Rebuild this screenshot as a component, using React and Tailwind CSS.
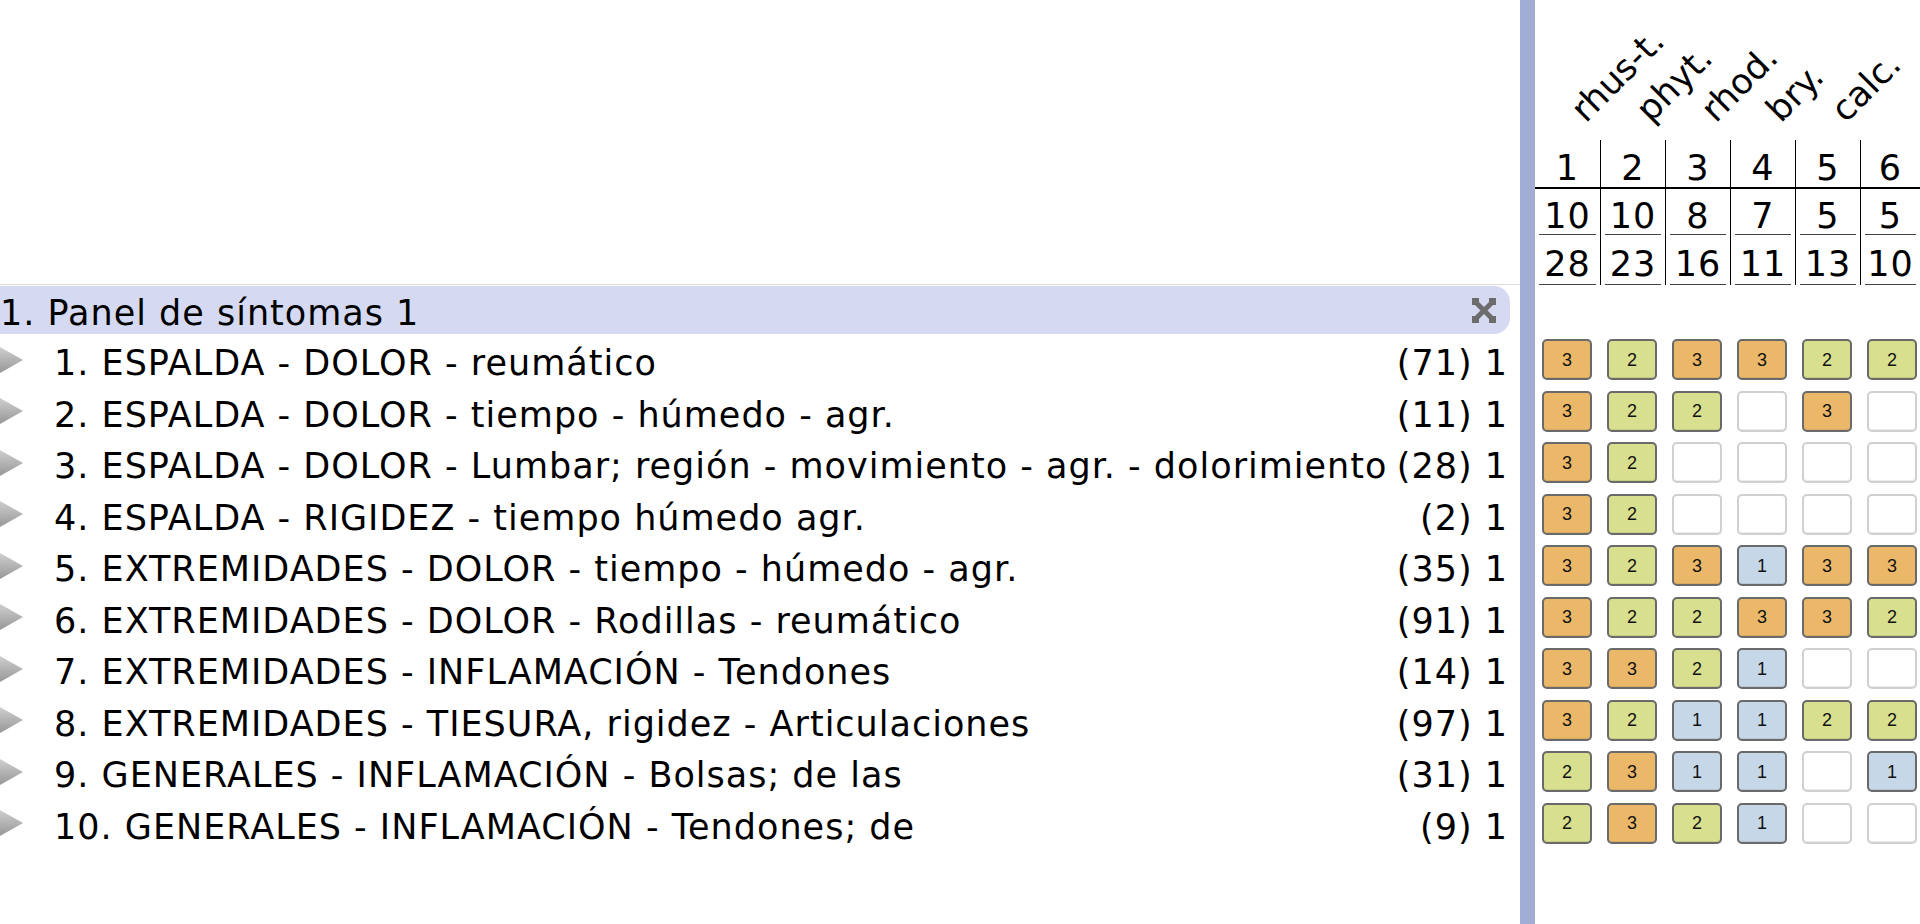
const SYMPTOMS = [
  { text: '1. ESPALDA - DOLOR - reumático', count: '(71) 1' },
  { text: '2. ESPALDA - DOLOR - tiempo - húmedo - agr.', count: '(11) 1' },
  { text: '3. ESPALDA - DOLOR - Lumbar; región - movimiento - agr. - dolorimiento', count: '(28) 1' },
  { text: '4. ESPALDA - RIGIDEZ - tiempo húmedo agr.', count: '(2) 1' },
  { text: '5. EXTREMIDADES - DOLOR - tiempo - húmedo - agr.', count: '(35) 1' },
  { text: '6. EXTREMIDADES - DOLOR - Rodillas - reumático', count: '(91) 1' },
  { text: '7. EXTREMIDADES - INFLAMACIÓN - Tendones', count: '(14) 1' },
  { text: '8. EXTREMIDADES - TIESURA, rigidez - Articulaciones', count: '(97) 1' },
  { text: '9. GENERALES - INFLAMACIÓN - Bolsas; de las', count: '(31) 1' },
  { text: '10. GENERALES - INFLAMACIÓN - Tendones; de', count: '(9) 1' },
]

const GRADES = [
  [3, 2, 3, 3, 2, 2],
  [3, 2, 2, 0, 3, 0],
  [3, 2, 0, 0, 0, 0],
  [3, 2, 0, 0, 0, 0],
  [3, 2, 3, 1, 3, 3],
  [3, 2, 2, 3, 3, 2],
  [3, 3, 2, 1, 0, 0],
  [3, 2, 1, 1, 2, 2],
  [2, 3, 1, 1, 0, 1],
  [2, 3, 2, 1, 0, 0],
]

const REMEDIES = [
  { label: 'rhus-t.', rank: 1, hits: 10, score: 28 },
  { label: 'phyt.', rank: 2, hits: 10, score: 23 },
  { label: 'rhod.', rank: 3, hits: 8, score: 16 },
  { label: 'bry.', rank: 4, hits: 7, score: 11 },
  { label: 'calc.', rank: 5, hits: 5, score: 13 },
  { label: '', rank: 6, hits: 5, score: 10 },
]

const CELL = {
  3: 'bg-[#ebb869] border-[#6a6a6a]',
  2: 'bg-[#d8df8e] border-[#6a6a6a]',
  1: 'bg-[#c6d7e7] border-[#6a6a6a]',
  0: 'bg-white border-[#d0d0d0]',
}

function Arrow() {
  return (
    <svg width="23" height="26" viewBox="0 0 23 26" className="shrink-0">
      <defs>
        <linearGradient id="tri" x1="0" y1="0" x2="0" y2="1">
          <stop offset="0" stopColor="#cfcfcf" />
          <stop offset="1" stopColor="#979797" />
        </linearGradient>
      </defs>
      <polygon points="0,0 23,13 0,26" fill="url(#tri)" />
    </svg>
  )
}

function CloseIcon() {
  return (
    <svg width="24" height="25" viewBox="0 0 24 25" className="shrink-0">
      <g stroke="#6c6c6c" strokeWidth="5">
        <line x1="4" y1="4.5" x2="20" y2="20.5" />
        <line x1="20" y1="4.5" x2="4" y2="20.5" />
      </g>
      <g fill="#6c6c6c">
        <rect x="0" y="0" width="7" height="7" />
        <rect x="17" y="0" width="7" height="7" />
        <rect x="0" y="18" width="7" height="7" />
        <rect x="17" y="18" width="7" height="7" />
      </g>
    </svg>
  )
}

export default function App() {
  return (
    <div className="flex h-[924px] w-[1920px] overflow-hidden bg-white font-['DejaVu_Sans',Verdana,sans-serif] text-[35px] leading-none tracking-[1px] text-black">
      {/* ── symptom list ── */}
      <div className="flex w-[1520px] shrink-0 flex-col">
        <div className="h-[285px] border-b border-[#dedede]" />
        <div className="mr-[10px] mt-[1px] flex h-[48px] items-center justify-between rounded-r-[16px] bg-[#d5daf2] pr-[14px]">
          <span className="pt-[6px] whitespace-nowrap">1. Panel de síntomas 1</span>
          <CloseIcon />
        </div>
        {SYMPTOMS.map((s) => (
          <div key={s.text} className="flex h-[51.5px] items-center pr-[12px]">
            <Arrow />
            <span className="ml-[31px] min-w-0 flex-1 whitespace-nowrap pt-[8px]">{s.text}</span>
            <span className="shrink-0 whitespace-nowrap pt-[8px]">{s.count}</span>
          </div>
        ))}
      </div>

      {/* ── splitter ── */}
      <div className="w-[15px] shrink-0 bg-[#a2add5]" />

      {/* ── remedy grid ── */}
      <div className="flex w-[385px] shrink-0 flex-col">
        <div className="grid h-[140px] grid-cols-[65px_65px_65px_65px_65px_60px]">
          {REMEDIES.map((r) => (
            <div key={r.rank} className="relative">
              {r.label && (
                <span className="absolute bottom-[12px] left-[55px] origin-bottom-left -rotate-45 whitespace-nowrap text-[35px] tracking-normal">
                  {r.label}
                </span>
              )}
            </div>
          ))}
        </div>
        <div className="grid grid-cols-[65px_65px_65px_65px_65px_60px]">
          {REMEDIES.map((r, i) => (
            <div key={r.rank} className={`flex flex-col ${i > 0 ? 'border-l-[1.5px] border-black' : ''}`}>
              <div className="flex h-[49px] items-end justify-center border-b-2 border-black pb-[1px]">{r.rank}</div>
              <div className="h-[46px] px-[4px]">
                <div className="flex h-full items-end justify-center border-b-[1.5px] border-[#444]">{r.hits}</div>
              </div>
              <div className="h-[50px] px-[4px]">
                <div className="flex h-full items-end justify-center border-b-[1.5px] border-[#444] pb-[2px]">{r.score}</div>
              </div>
            </div>
          ))}
        </div>
        <div className="mt-[49px] flex flex-col">
          {GRADES.map((row, ri) => (
            <div key={ri} className="grid h-[51.5px] grid-cols-[65px_65px_65px_65px_65px_60px] items-center">
              {row.map((g, ci) => (
                <div
                  key={ci}
                  className={`ml-[7px] flex h-[41px] w-[50px] items-center justify-center rounded-[5px] border-2 font-['Liberation_Sans',Arial,sans-serif] text-[18px] tracking-normal text-[#111] shadow-[inset_0_-1px_0_rgba(0,0,0,0.08)] ${CELL[g]}`}
                >
                  {g > 0 ? g : ''}
                </div>
              ))}
            </div>
          ))}
        </div>
      </div>
    </div>
  )
}
